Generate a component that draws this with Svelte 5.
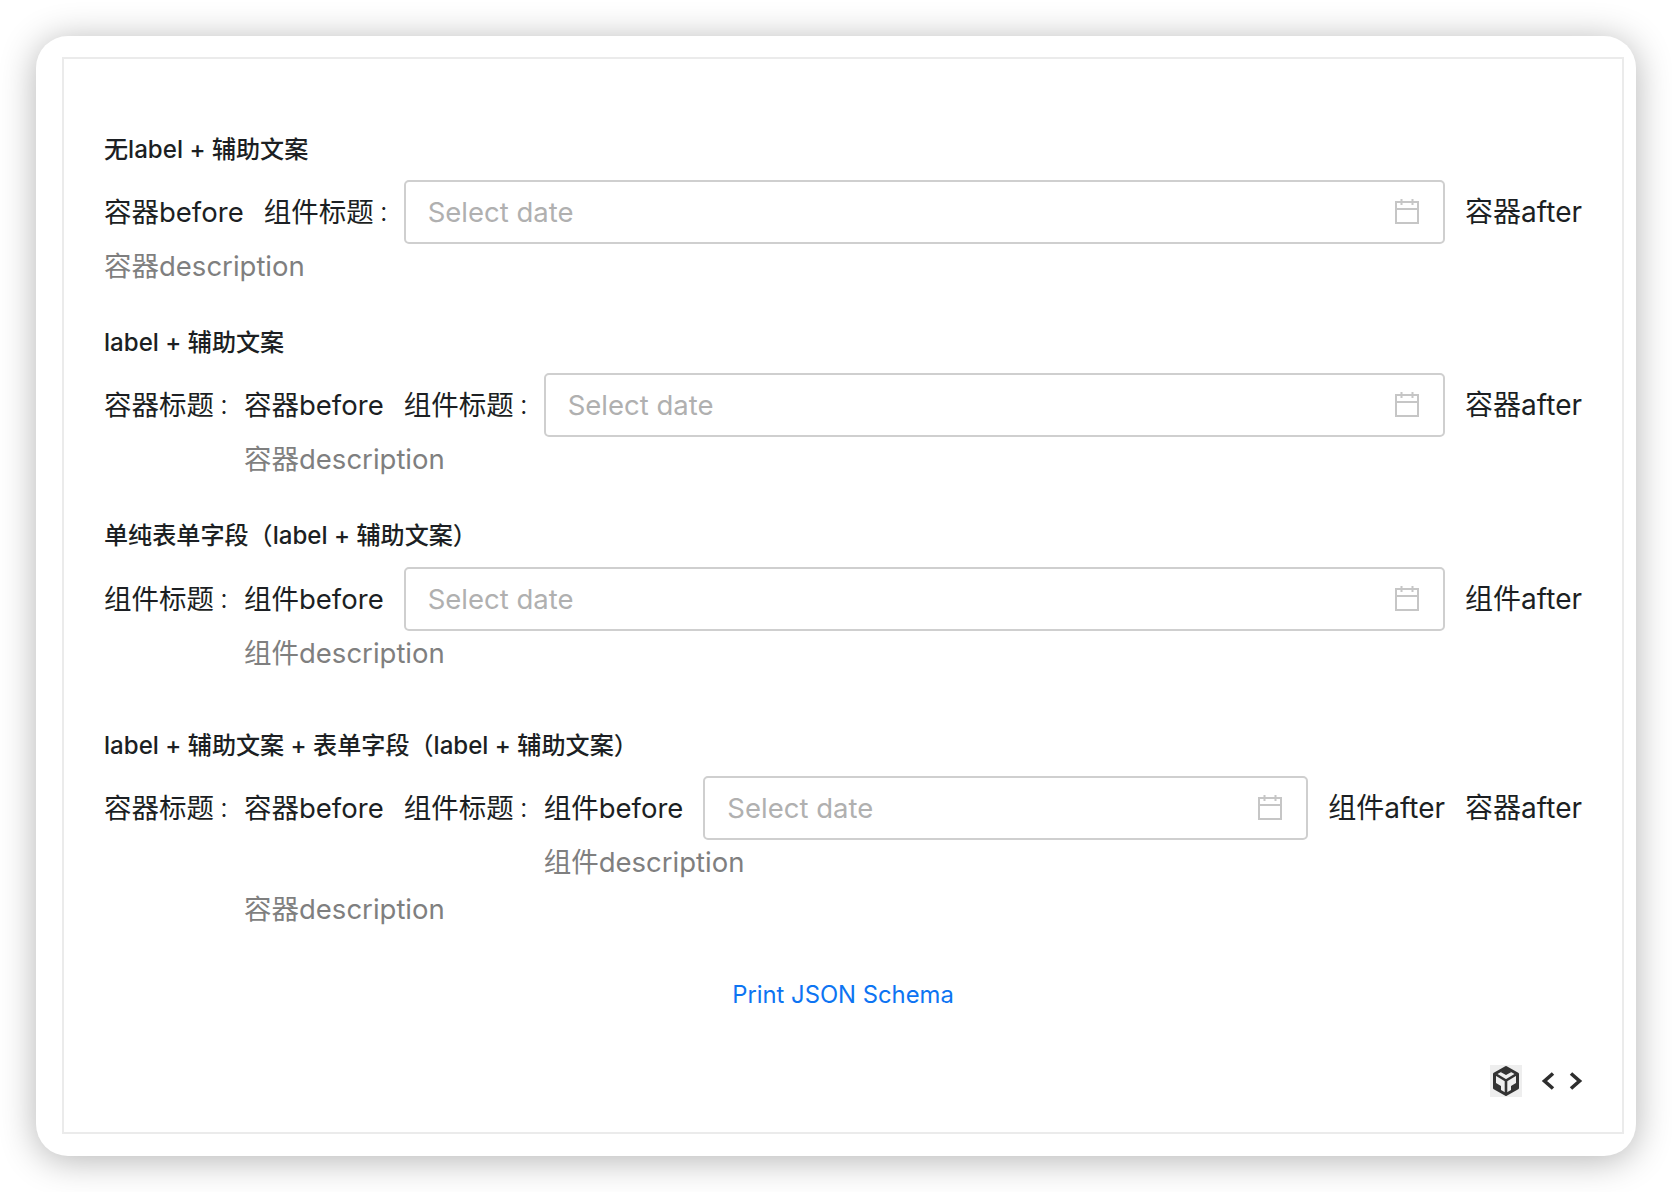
<script>
  const heads = {
    a: "无label + 辅助文案",
    b: "label + 辅助文案",
    c: "单纯表单字段（label + 辅助文案）",
    d: "label + 辅助文案 + 表单字段（label + 辅助文案）"
  };
</script>

{#snippet control()}
  <div class="input">
    <span class="placeholder">Select date</span>
    <svg class="cal" width="24" height="26" viewBox="0 0 24 26" fill="none" stroke="#c6c6c6" stroke-width="2">
      <rect x="1" y="3" width="22" height="21" />
      <path d="M1 10h22M6.500 0v6M17.500 0v6" />
    </svg>
  </div>
{/snippet}

<div class="page">
  <div class="card">
    <div class="frame">
      <section class="s1">
        <h4>{heads.a}</h4>
        <div class="row">
          <span class="txt gap">容器before</span>
          <span class="lbl">组件标题<i>：</i></span>
          {@render control()}
          <span class="txt after">容器after</span>
        </div>
        <p class="desc">容器description</p>
      </section>

      <section class="s2">
        <h4>{heads.b}</h4>
        <div class="row">
          <span class="lbl">容器标题<i>：</i></span>
          <div class="col">
            <div class="row">
              <span class="txt gap">容器before</span>
              <span class="lbl">组件标题<i>：</i></span>
              {@render control()}
              <span class="txt after">容器after</span>
            </div>
            <p class="desc">容器description</p>
          </div>
        </div>
      </section>

      <section class="s3">
        <h4>{heads.c}</h4>
        <div class="row">
          <span class="lbl">组件标题<i>：</i></span>
          <div class="col">
            <div class="row">
              <span class="txt gap">组件before</span>
              {@render control()}
              <span class="txt after">组件after</span>
            </div>
            <p class="desc">组件description</p>
          </div>
        </div>
      </section>

      <section class="s4">
        <h4>{heads.d}</h4>
        <div class="row">
          <span class="lbl">容器标题<i>：</i></span>
          <div class="col">
            <div class="row top">
              <span class="txt gap">容器before</span>
              <span class="lbl">组件标题<i>：</i></span>
              <div class="col">
                <div class="row">
                  <span class="txt gap">组件before</span>
                  {@render control()}
                  <span class="txt after">组件after</span>
                </div>
                <p class="desc">组件description</p>
              </div>
              <span class="txt after">容器after</span>
            </div>
            <p class="desc second">容器description</p>
          </div>
        </div>
      </section>

      <div class="link">Print JSON Schema</div>

      <div class="tools">
        <span class="cube">
          <svg width="28" height="32" viewBox="0 0 28 32">
            <path d="M14 2.500 25.500 9v14L14 29.500 2.500 23V9Z" fill="none" stroke="#333" stroke-width="3" stroke-linejoin="round" />
            <path d="M4 9.500 14 15.500 24 9.500M14 15.500V29" fill="none" stroke="#333" stroke-width="2.600" />
            <path d="M14 3 19.500 7 14 10 8.500 7ZM4 18l5 3v5l-5-3ZM24 18l-5 3v5l5-3Z" fill="#333" />
          </svg>
        </span>
        <svg class="chev" width="14" height="20" viewBox="0 0 14 20" fill="none" stroke="#2e2e2e" stroke-width="3.600">
          <path d="M12 2.500 3.500 10l8.500 7.500" />
        </svg>
        <svg class="chev" width="14" height="20" viewBox="0 0 14 20" fill="none" stroke="#2e2e2e" stroke-width="3.600">
          <path d="M2 2.500 10.500 10 2 17.500" />
        </svg>
      </div>
    </div>
  </div>
</div>

<style>
  :global(body) {
    margin: 0;
    background: #fff;
  }

  .page {
    box-sizing: border-box;
    height: 1192px;
    padding: 36px 0 0 36px;
    overflow: hidden;
  }

  .card {
    box-sizing: border-box;
    width: 1600px;
    height: 1120px;
    padding: 21px 12px 22px 26px;
    background: #fff;
    border-radius: 32px;
    box-shadow: 0 4px 36px rgba(0, 0, 0, 0.3);
    font-family: Inter, "Noto Sans CJK SC", sans-serif;
    color: #1c1f23;
  }

  .frame {
    box-sizing: border-box;
    height: 100%;
    padding: 73px 40px 0 40px;
    border: 2px solid #ebebeb;
  }

  section {
    margin-bottom: 43px;
  }

  .s3 {
    margin-bottom: 59px;
  }

  h4 {
    margin: 0 0 12px;
    font-size: 24.1px;
    font-weight: 500;
    line-height: 36px;
  }

  .s3 h4 {
    margin-bottom: 13px;
  }

  .row {
    display: flex;
    align-items: center;
    flex: 1;
    min-width: 0;
  }

  .row.top {
    align-items: flex-start;
  }

  .col {
    flex: 1;
    min-width: 0;
    align-self: flex-start;
  }

  .txt,
  .lbl {
    font-size: 27.5px;
    line-height: 64px;
    white-space: nowrap;
    flex: none;
  }

  .lbl {
    width: 140px;
    align-self: flex-start;
  }

  .lbl i {
    font-size: 20px;
    font-style: normal;
    font-family: "Noto Sans CJK TC", sans-serif;
    line-height: 0;
  }

  .gap {
    margin-right: 20px;
  }

  .after {
    margin-left: 20px;
    font-size: 28px;
  }

  .input {
    box-sizing: border-box;
    flex: 1;
    min-width: 0;
    height: 64px;
    display: flex;
    align-items: center;
    justify-content: space-between;
    padding: 0 24px 0 22px;
    border: 2px solid #cfcfcf;
    border-radius: 5px;
  }

  .placeholder {
    font-size: 27.5px;
    color: #b0b0b0;
  }

  .cal {
    flex: none;
  }

  .desc {
    margin: 6px 0 0;
    font-size: 27.5px;
    line-height: 32px;
    color: #7f7f7f;
  }

  .desc.second {
    margin-top: 15px;
  }

  .link {
    margin-top: 53px;
    text-align: center;
    font-size: 23.8px;
    line-height: 34px;
    color: #0d74f2;
  }

  .tools {
    display: flex;
    align-items: center;
    justify-content: flex-end;
    gap: 14px;
    margin: 53px -1px 0 0;
  }

  .cube {
    width: 32px;
    height: 32px;
    display: flex;
    align-items: center;
    justify-content: center;
    background: #eee;
    margin-right: 5px;
  }
</style>
